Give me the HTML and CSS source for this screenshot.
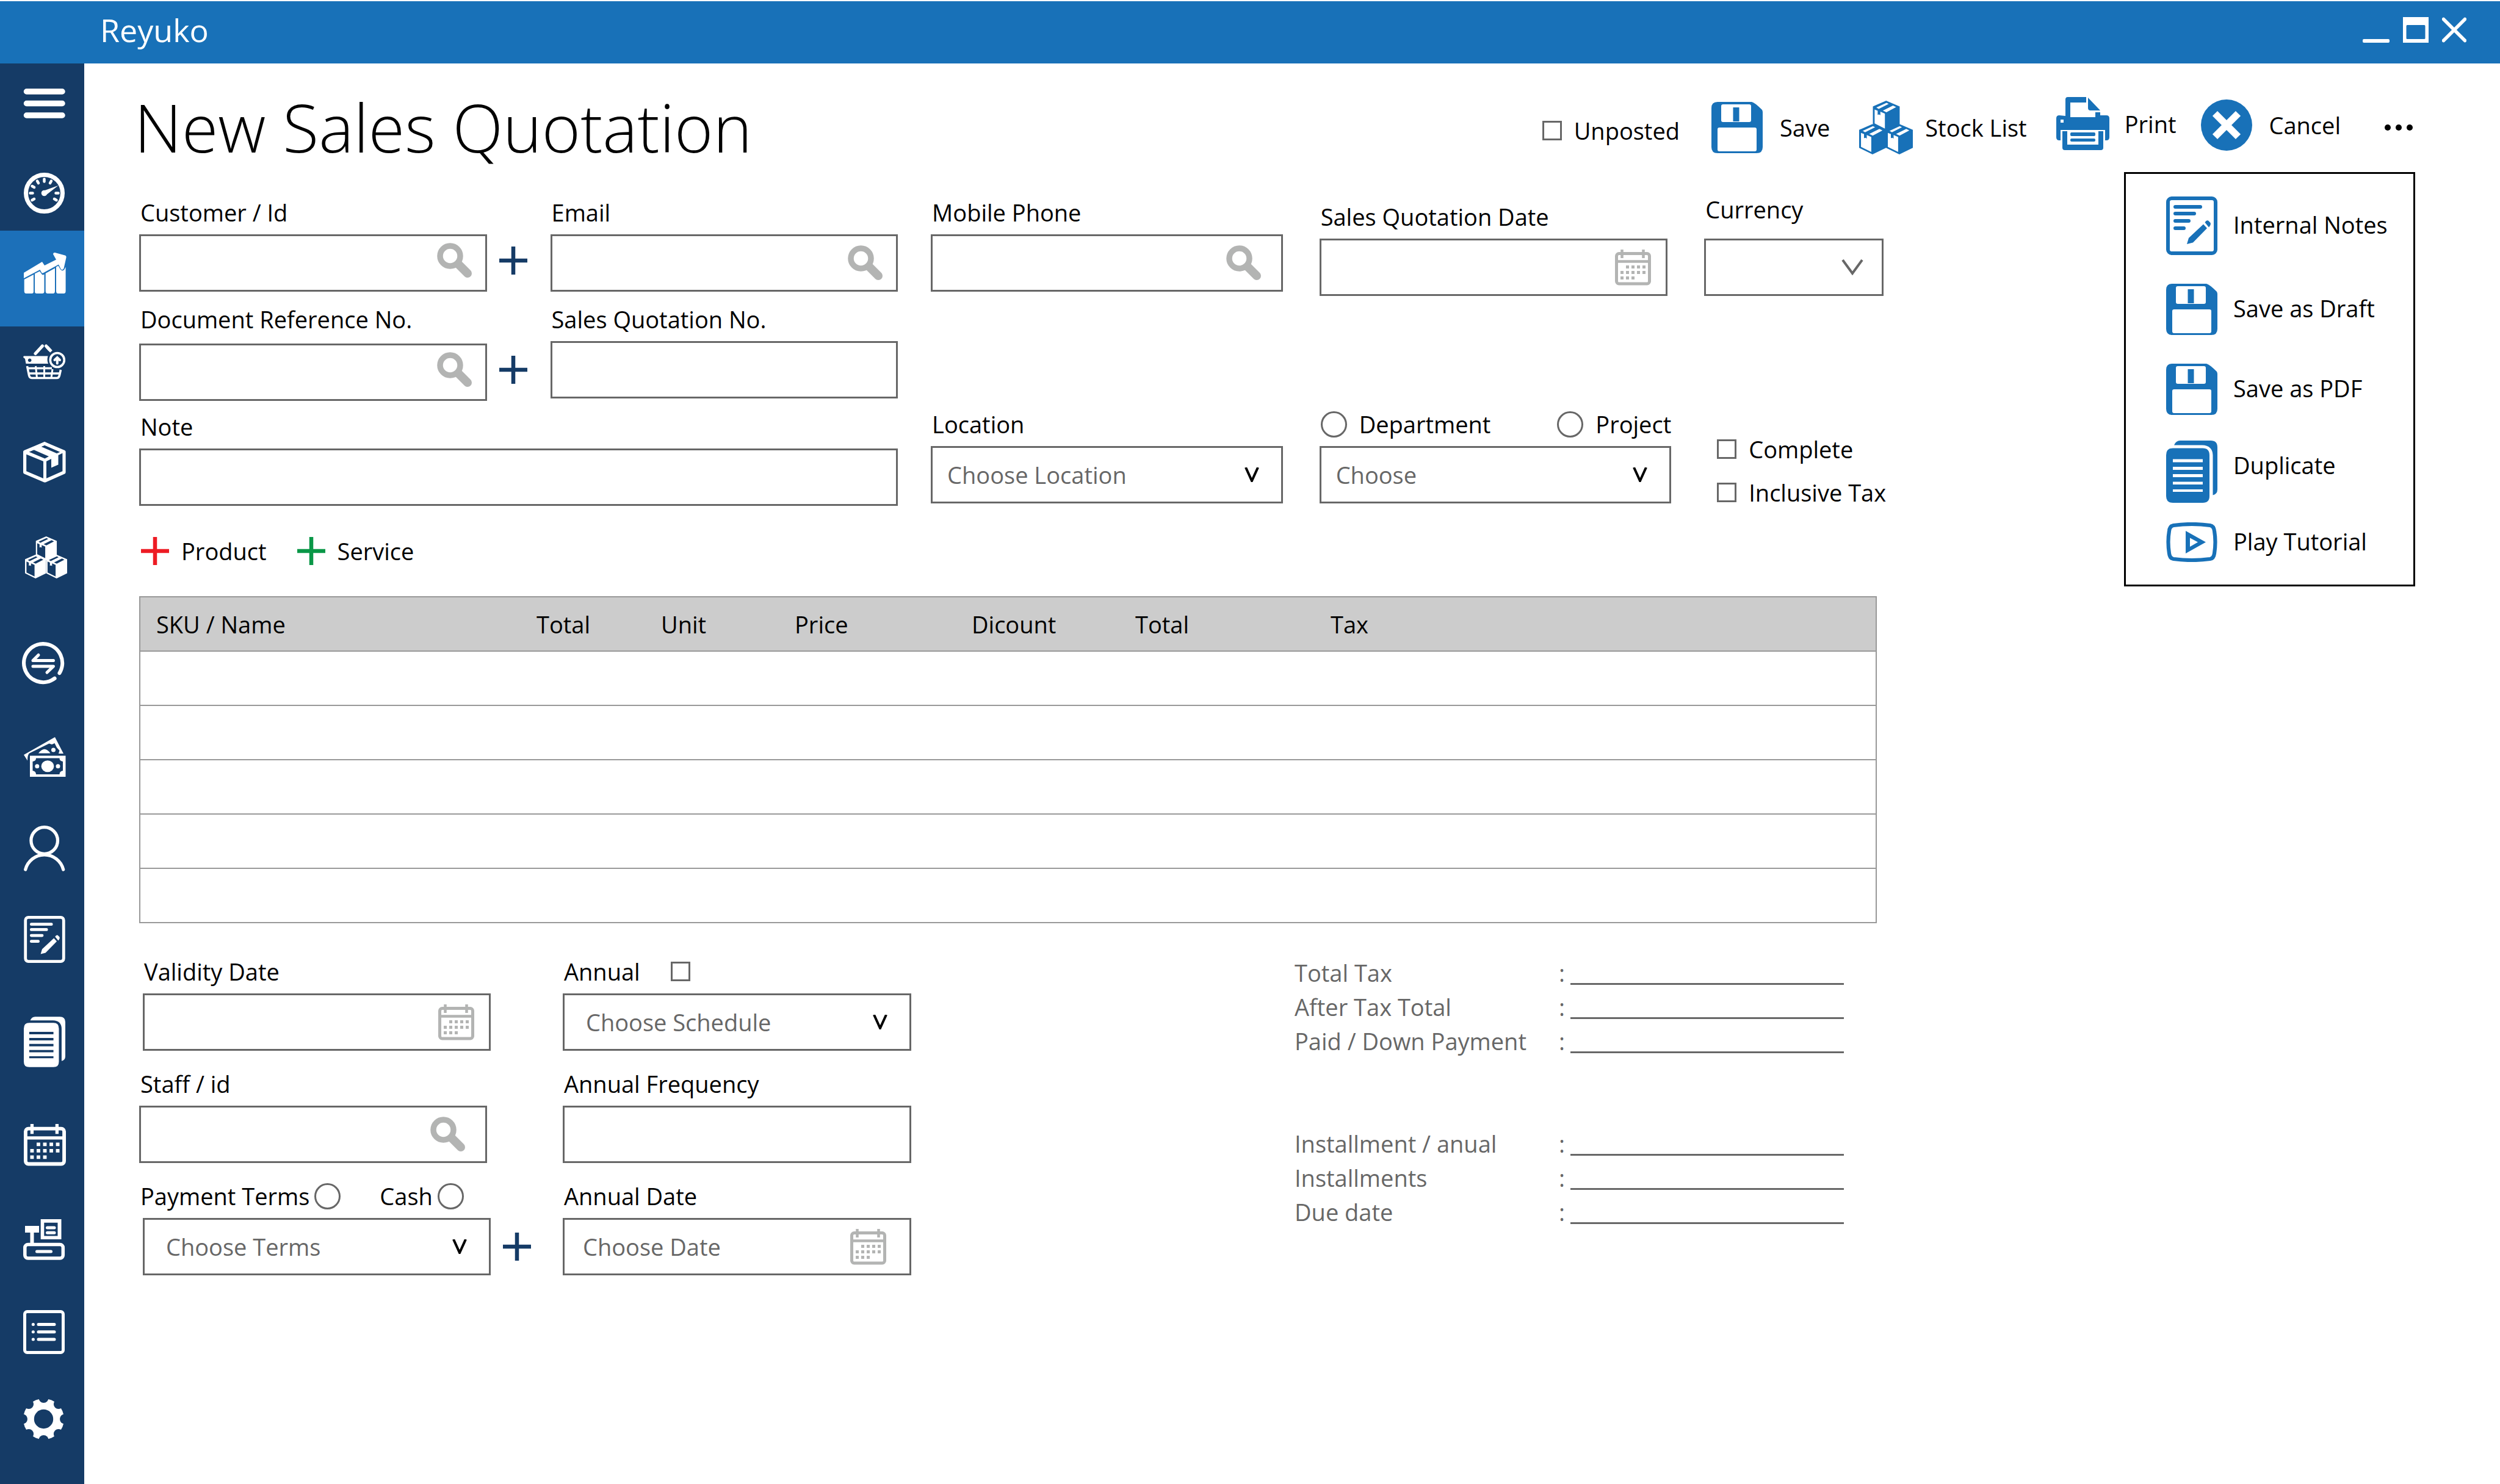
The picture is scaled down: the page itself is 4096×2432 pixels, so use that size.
FILE: index.html
```html
<!DOCTYPE html>
<html lang="en">
<head>
<meta charset="utf-8">
<title>Reyuko - New Sales Quotation</title>
<link rel="stylesheet" href="styles.css">
</head>
<body>
<svg class="sprite" aria-hidden="true">
  <defs>
    <symbol id="search" viewBox="0 0 58 58">
      <circle cx="21.5" cy="21.5" r="16.5" fill="none" stroke="currentColor" stroke-width="9.5"/>
      <path d="M36 36L50 50" stroke="currentColor" stroke-width="14" stroke-linecap="round"/>
    </symbol>
    <symbol id="calendar" viewBox="0 0 59 59">
      <rect x="2.5" y="6.5" width="54" height="49.5" rx="4" fill="none" stroke="currentColor" stroke-width="5"/>
      <path d="M3 19.5H56M11.500 0V14M46.500 0V14" stroke="currentColor" stroke-width="4.500" fill="none"/>
      <path d="M18 28.500H50M9 37.500H50M9 46.500H32" stroke="currentColor" stroke-width="5" stroke-dasharray="5 4" fill="none"/>
    </symbol>
    <symbol id="floppy" viewBox="0 0 84 84">
      <path fill="currentColor" fill-rule="evenodd" d="M10 0H66Q71 1 83 13Q84 15 84 17V74Q84 84 74 84H10Q0 84 0 74V10Q0 0 10 0ZM19 4Q16 4 16 7V30Q16 33 19 33H62Q65 33 65 30V7Q65 4 62 4ZM13 42Q10 42 10 45V78Q10 81 13 81H71Q74 81 74 78V45Q74 42 71 42ZM35.500 9H45.500V32H35.500Z"/>
    </symbol>
    <symbol id="notes" viewBox="0 0 84 96">
      <rect x="3" y="3" width="78" height="90" rx="6" fill="none" stroke="currentColor" stroke-width="6"/>
      <path d="M15 17H56M15 28H46M15 40H37M15 52H29" stroke="currentColor" stroke-width="6" stroke-linecap="round"/>
      <path fill="currentColor" d="M34 78L37 68L61 45.500 67 52 44 75.500ZM63.500 42.500Q66 38 69 39.500L72.500 43Q74 46 70 50.500Z"/>
    </symbol>
    <symbol id="duplicate" viewBox="0 0 84 102">
      <path fill="currentColor" fill-rule="evenodd" d="M11 12.500H60Q71 12.500 71 24V91Q71 102 60 102H11Q0 102 0 91V24Q0 12.500 11 12.500ZM11 30.500V35.500H60V30.500ZM11 43V48H60V43ZM11 55V60H60V55ZM11 67.500V72H60V67.500ZM11 80V84H60V80Z"/>
      <path fill="currentColor" d="M13 7.500Q16 0 23 0H73Q84 0 84 11V80Q84 88 76.500 89.500V24Q76 8 59 7.500Z"/>
    </symbol>
    <symbol id="parcel" viewBox="0 0 35 39">
      <path fill="currentColor" fill-rule="evenodd" d="M0 7.500L17.200 0 34.600 7.500V30.500L17.200 39 0 30.500ZM4.600 8.800L7.700 10.500 20.500 4.200 17.700 2.800ZM13 12.700L17.500 14.800 30 8.200 26 6.300ZM2.400 11.300V29.300L15.600 35.800V16.700L9.800 14.200V18.600L8 17.600 6.300 18.200V13Z"/>
    </symbol>
    <symbol id="parcels" viewBox="0 0 69 69">
      <use href="#parcel" x="17.500" y="0" width="35" height="39"/>
      <use href="#parcel" x="0" y="30" width="35" height="39"/>
      <use href="#parcel" x="34.500" y="30" width="35" height="39"/>
    </symbol>
    <symbol id="plus" viewBox="0 0 46 46">
      <path d="M23 0V46M0 23H46" stroke="currentColor" stroke-width="6.500"/>
    </symbol>
    <symbol id="chevron" viewBox="0 0 24 24">
      <path d="M2 0L12 22L22 0" fill="none" stroke="currentColor" stroke-width="4"/>
    </symbol>
    <symbol id="chevron-wide" viewBox="0 0 36 26">
      <path d="M2 1L18 23L34 1" fill="none" stroke="currentColor" stroke-width="4"/>
    </symbol>
    <mask id="cog">
      <circle cx="33.500" cy="33.500" r="33.500" fill="#fff"/>
      <circle cx="33.500" cy="33.500" r="15.700"/>
      <circle id="notch" cx="33.500" cy="-1" r="8"/>
      <use href="#notch" transform="rotate(45 33.500 33.500)"/>
      <use href="#notch" transform="rotate(90 33.500 33.500)"/>
      <use href="#notch" transform="rotate(135 33.500 33.500)"/>
      <use href="#notch" transform="rotate(180 33.500 33.500)"/>
      <use href="#notch" transform="rotate(225 33.500 33.500)"/>
      <use href="#notch" transform="rotate(270 33.500 33.500)"/>
      <use href="#notch" transform="rotate(315 33.500 33.500)"/>
    </mask>
  </defs>
</svg>

<header class="titlebar">
  <span class="brand">Reyuko</span>
  <div class="window-buttons">
    <button type="button" aria-label="Minimise"><svg width="44" height="42" viewBox="0 0 44 42"><rect y="36" width="44" height="6" rx="2" fill="#fff"/></svg></button>
    <button type="button" aria-label="Maximise"><svg width="42" height="42" viewBox="0 0 42 42"><path fill="#fff" fill-rule="evenodd" d="M0 0H42V42H0ZM7 13Q5.500 13 5.500 15V34.500Q5.500 36 7 36H35Q36.500 36 36.500 34.500V15Q36.500 13 35 13Z"/></svg></button>
    <button type="button" aria-label="Close"><svg width="40" height="42" viewBox="0 0 40 42"><path d="M2.500 3.500L37.500 38.500M37.500 3.500L2.500 38.500" stroke="#fff" stroke-width="5.500" stroke-linecap="round"/></svg></button>
  </div>
</header>

<div class="app">
  <nav class="sidebar" aria-label="Main">
    <a href="#menu" aria-label="Menu"><svg viewBox="0 0 74 84"><path d="M7.500 17H66M7.500 36.500H66M7.500 56H66" stroke="#fff" stroke-width="9.500" stroke-linecap="round"/></svg></a>
    <a href="#dashboard" aria-label="Dashboard"><svg viewBox="0 0 74 84"><g transform="translate(3 8)" stroke="#fff" fill="none"><circle cx="33.500" cy="33.500" r="30" stroke-width="7"/>
      <g stroke-width="4.500" stroke-linecap="round"><path id="tick" d="M10.500 33.500H14.500"/><use href="#tick" transform="rotate(30 33.500 33.500)"/><use href="#tick" transform="rotate(60 33.500 33.500)"/><use href="#tick" transform="rotate(90 33.500 33.500)"/><use href="#tick" transform="rotate(120 33.500 33.500)"/><use href="#tick" transform="rotate(180 33.500 33.500)"/><use href="#tick" transform="rotate(210 33.500 33.500)"/><use href="#tick" transform="rotate(330 33.500 33.500)"/></g>
      <circle cx="33.500" cy="33.500" r="4.800" fill="#fff" stroke="none"/><path d="M33 29.500L56.500 21 36 37Z" fill="#fff" stroke="none"/></g></svg></a>
    <a class="active" href="#sales" aria-label="Sales" aria-current="page"><svg viewBox="0 0 74 84"><g transform="translate(3 7)" fill="#fff"><path d="M0 33L30 15 34 21 53 11.500 48 2.500Q48-.5 51 0L67.500 4.500Q70 5.500 69.500 8L65.500 26Q63 30 60.500 26.500L57 19.500 31.500 33.500Q30 34 29 32.500L26.500 28 0 42Z"/><path d="M.7 44L16 36V64Q16 67 13 67H4Q.7 67 .7 63ZM18 34.500L26 30.500 30 36Q31 37 33.500 35.500V64Q33.500 67 30 67H21Q18 67 18 64ZM35.700 34L51 25.500V63Q51 67 48 67H39Q35.700 67 35.700 63ZM53 23.500L56.500 21.500 60 27.500Q63.500 31.500 66.500 27.500L68.600 23.500V63Q68.600 67 65.500 67H56Q53 67 53 63Z"/></g></svg></a>
    <a href="#purchases" aria-label="Purchases"><svg viewBox="0 0 74 84"><g transform="translate(2 0)" stroke="#fff" fill="none" stroke-width="4"><path stroke-width="5" stroke-linecap="round" d="M31.500 3L20 15.500"/><path stroke-width="5" stroke-linecap="round" d="M37.500 3L43 9"/><path stroke-width="5" d="M39 4.500L46 12"/>
      <path fill="#fff" stroke="none" fill-rule="evenodd" d="M1 19.500H40.500Q38.500 26 41 32H4.500L3 24Q0 22 0 21ZM10.600 23.500A2.900 2.900 0 1 0 10.700 23.500Z"/><circle cx="55.800" cy="26" r="11.500" stroke-width="3.600"/><path d="M55.800 31.500V22M51.500 26L55.800 22L60 26" stroke-linecap="round"/>
      <path d="M6.500 36L9.500 51Q10.500 55.500 14 55.500H55Q58.500 55.500 59.500 51L61.500 42M8 39.500H47M9 48H60" stroke-width="3.600"/><path d="M20.500 36L22.500 55.500M34.500 36V55.500M48 41L46 55.500" stroke-width="3"/></g></svg></a>
    <a href="#products" aria-label="Products"><svg viewBox="0 0 74 84"><g transform="translate(2 8)"><path d="M2.600 16.500L35 2.800 67 16.500V50L35.500 64 2.600 50Z" fill="none" stroke="#fff" stroke-width="5.200" stroke-linejoin="round"/><path fill="#fff" fill-rule="evenodd" d="M0 16L35 0 69.600 16 57.500 22V37.500L46 42.500V28L38 32V64H33V32L0 18.500ZM9.500 16.500L35.500 27.500 42 24 17.500 13.200ZM29.500 8L55 19 60.500 16.800 35.500 5.600Z"/></g></svg></a>
    <a href="#stock" aria-label="Stock"><svg viewBox="0 0 74 84"><use href="#parcels" x="5" y="8" width="69" height="69" color="#fff"/></svg></a>
    <a href="#transfers" aria-label="Transfers"><svg viewBox="0 0 74 84"><g transform="translate(0 6)" stroke="#fff" fill="none" stroke-linecap="round"><path stroke-width="6.200" d="M61.500 52A31.500 31.500 0 1 0 53.500 60.800"/><path stroke-width="5" stroke-linejoin="round" d="M51.500 31.500H18L27 22.500M18 41H51.500L41 51"/></g></svg></a>
    <a href="#cash" aria-label="Cash"><svg viewBox="0 0 74 84"><g transform="translate(3 9)" fill="#fff"><path d="M0 29L51 0 65 27H57L58.500 22 54 17 50.500 10 46 12 41.500 10.500 9 26.500Q6 29 6 38.500Z"/><path d="M24 26.500Q34 13 43.500 26.500Z"/><circle cx="48.500" cy="21" r="3.500"/><path fill-rule="evenodd" d="M10 30.500H68.500V65H10ZM20 34.500Q20 39 14.500 40V55Q20 56 20 61H58.500Q58.500 56 64 55V40Q58.500 39 58.500 34.500Z"/><ellipse cx="39" cy="47.700" rx="10.400" ry="9.500"/><circle cx="21.800" cy="47.700" r="3.500"/><circle cx="56" cy="47.700" r="3.500"/></g></svg></a>
    <a href="#contacts" aria-label="Contacts"><svg viewBox="0 0 74 84"><g transform="translate(3 5)" stroke="#fff" fill="none" stroke-width="5.200" stroke-linecap="round"><circle cx="33.700" cy="24.500" r="21.800"/><path d="M2.700 72A32 32 0 0 1 64.700 72"/></g></svg></a>
    <a href="#notes-page" aria-label="Notes"><svg viewBox="0 0 74 84"><use href="#notes" x="3" y="4" width="68" height="77" color="#fff"/></svg></a>
    <a href="#documents" aria-label="Documents"><svg viewBox="0 0 74 84"><use href="#duplicate" x="3" y="1" width="68" height="83" color="#fff"/></svg></a>
    <a href="#calendar-page" aria-label="Calendar"><svg viewBox="0 0 74 84"><use href="#calendar" x="3" y="8" width="69" height="69" color="#fff"/></svg></a>
    <a href="#register" aria-label="Register"><svg viewBox="0 0 74 84"><g transform="translate(2 8)" fill="none" stroke="#fff"><path stroke="none" fill="#fff" fill-rule="evenodd" d="M3 11H26V22H17.500V40H11.500V22H3ZM28.700 0H62.500V33H28.700ZM34.300 5.700V27.500H56.500V5.700Z"/><path d="M39.500 14H51M39.500 22.200H51M22.500 53H45.500" stroke-width="5" stroke-linecap="round"/><rect x="2.800" y="41.500" width="62.500" height="22.500" rx="5" stroke-width="5.500"/></g></svg></a>
    <a href="#reports" aria-label="Reports"><svg viewBox="0 0 74 84"><g transform="translate(2 6)" fill="none" stroke="#fff" stroke-width="5" stroke-linecap="round"><rect x="2.500" y="2.500" width="63" height="67" rx="4"/><path d="M25 23.500H51M25 35.800H51M25 48H51M16.300 23.500h.1M16.300 35.800h.1M16.300 48h.1"/></g></svg></a>
    <a href="#settings" aria-label="Settings"><svg viewBox="0 0 74 84"><g transform="translate(2 8)"><rect width="67" height="67" fill="#fff" mask="url(#cog)"/></g></svg></a>
  </nav>

  <main class="page">
    <div class="page-head">
      <h1>New Sales Quotation</h1>
      <div class="toolbar">
        <label class="check unposted"><input type="checkbox">Unposted</label>
        <button type="button" class="tool"><svg width="84" height="84"><use href="#floppy"/></svg>Save</button>
        <button type="button" class="tool tool-tight"><svg width="88" height="88"><use href="#parcels"/></svg>Stock List</button>
        <button type="button" class="tool tool-high"><svg width="88" height="88" viewBox="0 0 88 88"><path fill="currentColor" fill-rule="evenodd" d="M15 31V4Q15 0 19 0H49V9H23V33H64V25H72V30H82Q87 30 87 35V66Q87 71 82 71H80V54H7V71H5Q0 71 0 66V35Q0 30 5 30ZM7 37V42H12V37ZM52 1L72 22H56Q52 22 52 18ZM10 56H18V78H69V56H77V83Q77 87 73 87H14Q10 87 10 83ZM25 58H62Q64 58 64 60V62Q64 64 62 64H25Q23 64 23 62V60Q23 58 25 58ZM25 68H62Q64 68 64 70V71Q64 73 62 73H25Q23 73 23 71V70Q23 68 25 68Z"/></svg>Print</button>
        <button type="button" class="tool tool-raised"><svg width="84" height="84" viewBox="0 0 84 84"><circle cx="42" cy="42" r="42" fill="currentColor"/><path d="M23 23L61 61M61 23L23 61" stroke="#fff" stroke-width="11.500"/></svg>Cancel</button>
        <div class="more">
          <button type="button" class="more-button" aria-label="More actions"><svg width="46" height="10" viewBox="0 0 46 10"><circle cx="5" cy="5" r="5"/><circle cx="23" cy="5" r="5"/><circle cx="41" cy="5" r="5"/></svg></button>
          <div class="menu">
            <button type="button"><svg width="84" height="96"><use href="#notes"/></svg><span>Internal Notes</span></button>
            <button type="button"><svg width="84" height="84"><use href="#floppy"/></svg><span>Save as Draft</span></button>
            <button type="button"><svg width="84" height="84"><use href="#floppy"/></svg><span>Save as PDF</span></button>
            <button type="button"><svg width="84" height="102"><use href="#duplicate"/></svg><span class="lifted">Duplicate</span></button>
            <button type="button"><svg width="84" height="65" viewBox="0 0 84 65"><path d="M12 5Q42 1 72 5Q78 6 79 14Q82 32 79 51Q78 59 72 60Q42 64 12 60Q6 59 5 51Q2 32 5 14Q6 6 12 5Z" fill="none" stroke="currentColor" stroke-width="6.200"/><path fill="currentColor" fill-rule="evenodd" d="M32 14L65 32.500 32 51ZM39 25.500V40L52 32.500Z"/></svg><span>Play Tutorial</span></button>
          </div>
        </div>
      </div>
    </div>

    <form class="form">
      <div class="details">
        <div class="field c1 r1 up-m">
          <label for="customer">Customer / Id</label>
          <div class="row"><div class="control"><input id="customer" type="text"><button type="button" class="icon" aria-label="Find customer"><svg width="58" height="58"><use href="#search"/></svg></button></div><button type="button" class="add" aria-label="Add customer"><svg width="46" height="46"><use href="#plus"/></svg></button></div>
        </div>
        <div class="field c2 r1 up-m">
          <label for="email">Email</label>
          <div class="control"><input id="email" type="text"><button type="button" class="icon" aria-label="Find email"><svg width="58" height="58"><use href="#search"/></svg></button></div>
        </div>
        <div class="field c3 r1 up-m">
          <label for="phone">Mobile Phone</label>
          <div class="control control-wide"><input id="phone" type="text"><button type="button" class="icon" aria-label="Find phone"><svg width="58" height="58"><use href="#search"/></svg></button></div>
        </div>
        <div class="field c4 r1 short">
          <label for="qdate">Sales Quotation Date</label>
          <div class="control control-date"><input id="qdate" type="text"><button type="button" class="icon" aria-label="Pick date"><svg width="59" height="59"><use href="#calendar"/></svg></button></div>
        </div>
        <div class="field c5 r1 roomy">
          <label for="currency">Currency</label>
          <div class="control select"><select id="currency"><option></option></select><svg class="wide-chevron" width="36" height="26"><use href="#chevron-wide"/></svg></div>
        </div>

        <div class="field c1 r2 airy">
          <label for="docref">Document Reference No.</label>
          <div class="row"><div class="control"><input id="docref" type="text"><button type="button" class="icon" aria-label="Find document"><svg width="58" height="58"><use href="#search"/></svg></button></div><button type="button" class="add" aria-label="Add document"><svg width="46" height="46"><use href="#plus"/></svg></button></div>
        </div>
        <div class="field c2 r2 up-s">
          <label for="qno">Sales Quotation No.</label>
          <div class="control"><input id="qno" type="text"></div>
        </div>

        <div class="field c12 r3">
          <label for="note">Note</label>
          <div class="control"><input id="note" type="text"></div>
        </div>
        <div class="field c3 r3 up-s">
          <label for="location">Location</label>
          <div class="control select"><select id="location"><option>Choose Location</option></select><svg width="24" height="24"><use href="#chevron"/></svg></div>
        </div>
        <div class="field c4 r3 up-s">
          <div class="radios spread">
            <label class="radio"><input type="radio" name="scope">Department</label>
            <label class="radio"><input type="radio" name="scope">Project</label>
          </div>
          <div class="control select"><select aria-label="Department or project"><option>Choose</option></select><svg width="24" height="24"><use href="#chevron"/></svg></div>
        </div>
        <div class="checks c5 r3">
          <label class="check"><input type="checkbox">Complete</label>
          <label class="check"><input type="checkbox">Inclusive Tax</label>
        </div>
      </div>

      <div class="adders">
        <button type="button" class="adder product"><svg width="46" height="46"><use href="#plus"/></svg>Product</button>
        <button type="button" class="adder service"><svg width="46" height="46"><use href="#plus"/></svg>Service</button>
      </div>

      <table class="items">
        <colgroup><col class="w-sku"><col class="w-qty"><col class="w-unit"><col class="w-price"><col class="w-disc"><col class="w-total"><col></colgroup>
        <thead><tr><th>SKU / Name</th><th>Total</th><th>Unit</th><th>Price</th><th>Dicount</th><th>Total</th><th>Tax</th></tr></thead>
        <tbody>
          <tr><td colspan="7"></td></tr>
          <tr><td colspan="7"></td></tr>
          <tr><td colspan="7"></td></tr>
          <tr><td colspan="7"></td></tr>
          <tr><td colspan="7"></td></tr>
        </tbody>
      </table>

      <div class="terms">
        <div class="stack">
          <div class="field inset">
            <label for="validity">Validity Date</label>
            <div class="row"><div class="control control-date"><input id="validity" type="text"><button type="button" class="icon" aria-label="Pick date"><svg width="59" height="59"><use href="#calendar"/></svg></button></div></div>
          </div>
          <div class="field">
            <label for="staff">Staff / id</label>
            <div class="row row-short"><div class="control control-wide"><input id="staff" type="text"><button type="button" class="icon" aria-label="Find staff"><svg width="58" height="58"><use href="#search"/></svg></button></div></div>
          </div>
          <div class="field">
            <div class="radios">
              <label class="radio">Payment Terms<input type="radio" name="pay"></label>
              <label class="radio">Cash<input type="radio" name="pay"></label>
            </div>
            <div class="row inset"><div class="control select select-wide"><select aria-label="Payment terms"><option>Choose Terms</option></select><svg width="24" height="24"><use href="#chevron"/></svg></div><button type="button" class="add" aria-label="Add terms"><svg width="46" height="46"><use href="#plus"/></svg></button></div>
          </div>
        </div>
        <div class="stack">
          <div class="field">
            <label class="check check-after">Annual<input type="checkbox"></label>
            <div class="control select select-wide"><select aria-label="Annual schedule"><option>Choose Schedule</option></select><svg width="24" height="24"><use href="#chevron"/></svg></div>
          </div>
          <div class="field">
            <label for="freq">Annual Frequency</label>
            <div class="control"><input id="freq" type="text"></div>
          </div>
          <div class="field">
            <label for="adate">Annual Date</label>
            <div class="control control-wider"><input id="adate" type="text" placeholder="Choose Date"><button type="button" class="icon" aria-label="Pick date"><svg width="59" height="59"><use href="#calendar"/></svg></button></div>
          </div>
        </div>
        <div class="summary">
          <div class="sum"><label for="s1">Total Tax</label><span>:</span><input id="s1" type="text"></div>
          <div class="sum"><label for="s2">After Tax Total</label><span>:</span><input id="s2" type="text"></div>
          <div class="sum"><label for="s3">Paid / Down Payment</label><span>:</span><input id="s3" type="text"></div>
          <div class="sum sum-break"><label for="s4">Installment / anual</label><span>:</span><input id="s4" type="text"></div>
          <div class="sum"><label for="s5">Installments</label><span>:</span><input id="s5" type="text"></div>
          <div class="sum"><label for="s6">Due date</label><span>:</span><input id="s6" type="text"></div>
        </div>
      </div>
    </form>
  </main>
</div>
</body>
</html>
```
FILE: styles.css
```css
:root {
  --blue: #1871b8;
  --navy: #153b66;
  --line: #676767;
  --muted: #676767;
  --soft: #b3b4b3;
}

* { box-sizing: border-box; }

body {
  margin: 0;
  min-height: 100vh;
  display: flex;
  flex-direction: column;
  background: #fff;
  color: #000;
  font-family: "Open Sans", "Noto Sans", sans-serif;
  font-size: 38px;
  line-height: 52px;
}

button, input, select { font: inherit; color: inherit; }
button { padding: 0; border: 0; background: none; cursor: pointer; }
label, button { white-space: nowrap; }
svg { display: block; flex: none; }
.sprite { position: absolute; width: 0; height: 0; }

/* Title bar */
.titlebar {
  display: flex;
  justify-content: space-between;
  align-items: center;
  height: 104px;
  padding: 0 55px 8px 164px;
  border-top: 2px solid #fff;
  background: var(--blue);
  color: #fff;
}
.brand { font-size: 52px; line-height: 68px; }
.window-buttons { display: flex; gap: 22px; }

/* Sidebar */
.app { flex: 1; display: grid; grid-template-columns: 138px minmax(0, 1fr); }
.sidebar {
  display: grid;
  grid-template-rows: 142px 132px 157px 152px 155px 174px 154px 149px 149px 168px 169px 156px 151px 143px 1fr;
  background: var(--navy);
}
.sidebar a { padding: 29px 0 0 36px; }
.sidebar a.active { background: #1c70b9; }
.sidebar svg { width: 74px; height: 84px; }

/* Page header */
.page { padding: 37px 139px 0 90px; }
.page-head { display: flex; justify-content: space-between; align-items: center; }
h1 { margin: 0 0 0 -8px; font-size: 108px; line-height: 136px; font-weight: 300; }
.toolbar { display: flex; align-items: center; gap: 48px; }
.tool { display: flex; align-items: center; gap: 28px; }
.tool svg { color: var(--blue); }
.tool-tight { gap: 20px; }
.tool-raised { margin-left: -8px; padding-bottom: 8px; }
.tool-high { gap: 24px; padding-bottom: 12px; }
.check { display: flex; align-items: center; gap: 20px; }
.check-after { gap: 50px; }
.unposted { padding: 10px 4px 0 0; }
.more { position: relative; padding: 0 4px 0 24px; }
.more-button { display: block; }
.menu {
  position: absolute;
  z-index: 1;
  top: 78px;
  right: 0;
  width: 477px;
  display: grid;
  grid-template-rows: 143px 131px 126px 134px auto;
  align-items: start;
  padding: 37px 0 37px 66px;
  border: 3px solid #000;
  background: #fff;
}
.menu button { display: flex; align-items: center; gap: 26px; }
.menu svg { color: var(--blue); }
.menu span { padding-bottom: 4px; }
.menu .lifted { padding-bottom: 22px; }

/* Tick boxes and radios */
input[type="checkbox"], input[type="radio"] {
  appearance: none;
  flex: none;
  margin: 0;
  border: 3px solid var(--line);
  background: #fff;
}
input[type="checkbox"] { width: 32px; height: 32px; }
input[type="radio"] { width: 43px; height: 43px; border-radius: 50%; }
.radio { display: flex; align-items: center; gap: 8px; }
.radios { display: flex; gap: 64px; padding-left: 2px; }
.radios.spread { justify-content: space-between; }
.spread .radio { gap: 20px; }

/* Fields; the right margin keeps the form clear of the open menu */
.form { margin: 40px 871px 0 0; }
.details {
  display: grid;
  grid-template-columns:
    minmax(0, 620fr) 54px minmax(0, 570fr) 54px minmax(0, 577fr)
    60px minmax(0, 577fr) 54px minmax(0, 294fr);
  row-gap: 12px;
  align-items: end;
}
.c1 { grid-column: 1; }
.c12 { grid-column: 1 / 4; }
.c2 { grid-column: 3; }
.c3 { grid-column: 5; }
.c4 { grid-column: 7; }
.c5 { grid-column: 9; }
.r1 { grid-row: 1; }
.r2 { grid-row: 2; }
.r3 { grid-row: 3; }
.up-s { margin-bottom: 4px; }
.up-m { margin-bottom: 7px; }
.short { margin-right: 6px; }

.field { display: flex; flex-direction: column; gap: 10px; }
.field > label { padding-left: 2px; }
.field.airy { gap: 14px; }
.field.roomy { gap: 22px; }
.inset { padding-left: 6px; }
.row {
  display: grid;
  grid-template-columns: minmax(0, 1fr) 46px;
  column-gap: 20px;
  align-items: center;
  margin-right: -16px;
}
.row-short { margin-right: -10px; }
.details .row .icon, .details .row .add { margin-bottom: 8px; }
.control { display: flex; align-items: center; height: 94px; padding-right: 21px; border: 3px solid var(--line); background: #fff; }
.control-date { padding-right: 24px; }
.control-wide { padding-right: 32px; }
.control-wider { padding-right: 38px; }
.control input { flex: 1; min-width: 0; height: 100%; padding: 0 0 0 30px; border: 0; background: none; }
.control input::placeholder { color: var(--muted); opacity: 1; }
.icon { flex: none; color: var(--soft); }
.add { color: var(--navy); }
.select { display: grid; padding: 0; color: #000; }
.select select, .select svg { grid-area: 1 / 1; }
.select select { appearance: none; width: 100%; height: 100%; padding: 0 90px 0 24px; border: 0; background: none; color: var(--muted); }
.select-wide select { padding-left: 35px; }
.select svg { justify-self: end; margin-right: 36px; pointer-events: none; }
.select .wide-chevron { margin-right: 30px; color: var(--line); }
.checks { display: flex; flex-direction: column; gap: 19px; margin-bottom: -4px; padding-left: 21px; }

/* Items */
.adders { display: flex; gap: 50px; margin: 48px 0; padding-left: 3px; }
.adder { display: flex; align-items: center; gap: 20px; }
.product svg { color: #ed1c24; }
.service svg { color: #0a9747; }
.items { width: calc(100% - 11px); table-layout: fixed; border-collapse: collapse; border: 2px solid #999; }
.items tr { height: 89px; }
.items th { padding: 0 0 0 26px; background: #ccc; font-weight: 400; text-align: left; }
.items td { padding: 0; border-top: 2px solid #999; }
.w-sku { width: 624px; }
.w-qty { width: 204px; }
.w-unit { width: 219px; }
.w-price { width: 290px; }
.w-disc { width: 268px; }
.w-total { width: 320px; }

/* Terms and totals */
.terms {
  display: grid;
  grid-template-columns: minmax(0, 626fr) 68px minmax(0, 571fr) 628px minmax(0, 900fr) 65px;
  margin-top: 53px;
}
.stack { display: flex; flex-direction: column; gap: 28px; }
.stack:nth-child(1) { grid-column: 1; }
.stack:nth-child(2) { grid-column: 3; }
.summary { grid-column: 5; display: flex; flex-direction: column; color: var(--muted); line-height: 56px; }
.sum { display: grid; grid-template-columns: 433px 19px minmax(0, 1fr); height: 56px; }
.sum-break { margin-top: 112px; }
.sum input { width: 100%; height: 48px; padding: 0; border: 0; border-bottom: 3px solid var(--line); background: none; }
```
